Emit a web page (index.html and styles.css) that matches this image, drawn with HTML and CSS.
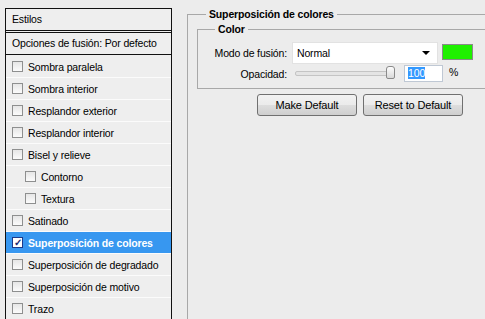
FILE: index.html
```html
<!DOCTYPE html>
<html lang="es">
<head>
    <meta charset="UTF-8">
    <title>Estilo de capa</title>
    <link rel="stylesheet" href="styles.css">
</head>
<body>

<div class="window">
    <div class="styles-list">
        <div class="list-head">Estilos</div>
        <div class="list-blend">Opciones de fusión: Por defecto</div>
        <div class="list-item"><span class="check"></span>Sombra paralela</div>
        <div class="list-item"><span class="check"></span>Sombra interior</div>
        <div class="list-item"><span class="check"></span>Resplandor exterior</div>
        <div class="list-item"><span class="check"></span>Resplandor interior</div>
        <div class="list-item"><span class="check"></span>Bisel y relieve</div>
        <div class="list-item sub"><span class="check"></span>Contorno</div>
        <div class="list-item sub"><span class="check"></span>Textura</div>
        <div class="list-item"><span class="check"></span>Satinado</div>
        <div class="list-item selected"><span class="check checked">&#10003;</span>Superposición de colores</div>
        <div class="list-item"><span class="check"></span>Superposición de degradado</div>
        <div class="list-item"><span class="check"></span>Superposición de motivo</div>
        <div class="list-item"><span class="check"></span>Trazo</div>
        <div class="list-item"></div>
    </div>

    <div class="settings">
        <fieldset class="group outer">
            <legend>Superposición de colores</legend>
            <fieldset class="group inner">
                <legend>Color</legend>
                <div class="field-row">
                    <label class="field-label">Modo de fusión:</label>
                    <div class="select">Normal<span class="arrow"></span></div>
                    <span class="swatch"></span>
                </div>
                <div class="field-row">
                    <label class="field-label">Opacidad:</label>
                    <div class="slider"><span class="thumb"></span></div>
                    <span class="number"><span class="sel">100</span></span>
                    <span class="unit">%</span>
                </div>
            </fieldset>
            <div class="buttons">
                <button>Make Default</button>
                <button>Reset to Default</button>
            </div>
        </fieldset>
    </div>
</div>

</body>
</html>
```

FILE: styles.css
```css
html, body {
    margin: 0;
    height: 100%;
    overflow: hidden;
}

body {
    font-family: 'Liberation Sans', Arial, sans-serif;
    font-size: 10.5px;
    letter-spacing: -0.15px;
    color: #000;
    background-color: #ececec;
}

.window {
    display: flex;
    align-items: flex-start;
    padding: 8px 0 0 5px;
}

/* left list */
.styles-list {
    width: 165px;
    border: 1px solid #111;
    background-color: #eeeeee;
    flex-shrink: 0;
}

.list-head {
    height: 21px;
    line-height: 21px;
    padding-left: 6px;
    border-bottom: 3px double #111;
}

.list-blend {
    height: 21px;
    line-height: 21px;
    padding-left: 6px;
    border-bottom: 1px solid #111;
    margin-bottom: 1px;
}

.list-item {
    display: flex;
    align-items: center;
    height: 21px;
    padding-left: 6px;
    border-bottom: 1px solid #fbfbfb;
}

.list-item.sub {
    padding-left: 19px;
}

.list-item.selected {
    background-color: #3797f0;
    color: #fff;
    font-weight: bold;
}

.check {
    width: 9px;
    height: 9px;
    border: 1px solid #8e8f8f;
    background: linear-gradient(#e6e6e6, #fbfbfb);
    margin-right: 5px;
    font-size: 10px;
    line-height: 9px;
    text-align: center;
    color: #1c2a72;
}

.check.checked {
    background: #fff;
    border-color: #1c3a8a;
}

/* right side */
.settings {
    width: 330px;
    flex-shrink: 0;
    margin-left: 15px;
}

.group {
    border: 1px solid #a8a8a8;
    margin: 0;
}

.group legend {
    font-weight: bold;
    padding: 0 3px;
}

.outer {
    border-right: none;
    padding: 3px 0 240px 9px;
}

.outer > legend {
    margin-left: 9px;
}

.inner {
    border-right: none;
    padding: 6px 0 6px 0;
}

.inner > legend {
    margin-left: 17px;
}

.field-row {
    display: flex;
    align-items: center;
    margin-top: 1px;
}

.field-label {
    width: 89px;
    text-align: right;
    padding-right: 5px;
}

.select {
    position: relative;
    width: 140px;
    height: 20px;
    line-height: 21px;
    padding-left: 4px;
    background-color: #fff;
    border: 1px solid #e2e2e2;
}

.arrow {
    position: absolute;
    right: 7px;
    top: 8px;
    border-left: 4px solid transparent;
    border-right: 4px solid transparent;
    border-top: 4px solid #000;
}

.swatch {
    width: 29px;
    height: 14px;
    margin-left: 4px;
    margin-top: -3px;
    background-color: #1ff000;
    border: 1px solid #8a8a8a;
}

.slider {
    position: relative;
    width: 97px;
    height: 3px;
    margin-left: 3px;
    border: 1px solid #c4c4c4;
    border-radius: 2px;
    background-color: #e4e4e4;
}

.thumb {
    position: absolute;
    left: 90px;
    top: -6px;
    width: 7px;
    height: 11px;
    border: 1px solid #8a8a8a;
    border-radius: 3px 3px 2px 2px;
    background: linear-gradient(#fdfdfd, #d9d9d9);
}

.number {
    width: 34px;
    height: 15px;
    margin-left: 10px;
    padding-left: 3px;
    line-height: 15px;
    background-color: #fff;
    border: 1px solid #bfc8d4;
}

.sel {
    background-color: #3399ff;
    color: #fff;
}

.unit {
    margin-left: 6px;
    margin-top: -3px;
}

.buttons {
    display: flex;
    gap: 6px;
    margin: 5px 0 0 60px;
}

button {
    width: 100px;
    height: 22px;
    font-family: inherit;
    font-size: 11px;
    letter-spacing: -0.15px;
    color: #000;
    border: 1px solid #707070;
    border-radius: 3px;
    background: linear-gradient(#f2f2f2 0%, #ebebeb 50%, #dddddd 51%, #cfcfcf 100%);
    padding: 0;
}
```
